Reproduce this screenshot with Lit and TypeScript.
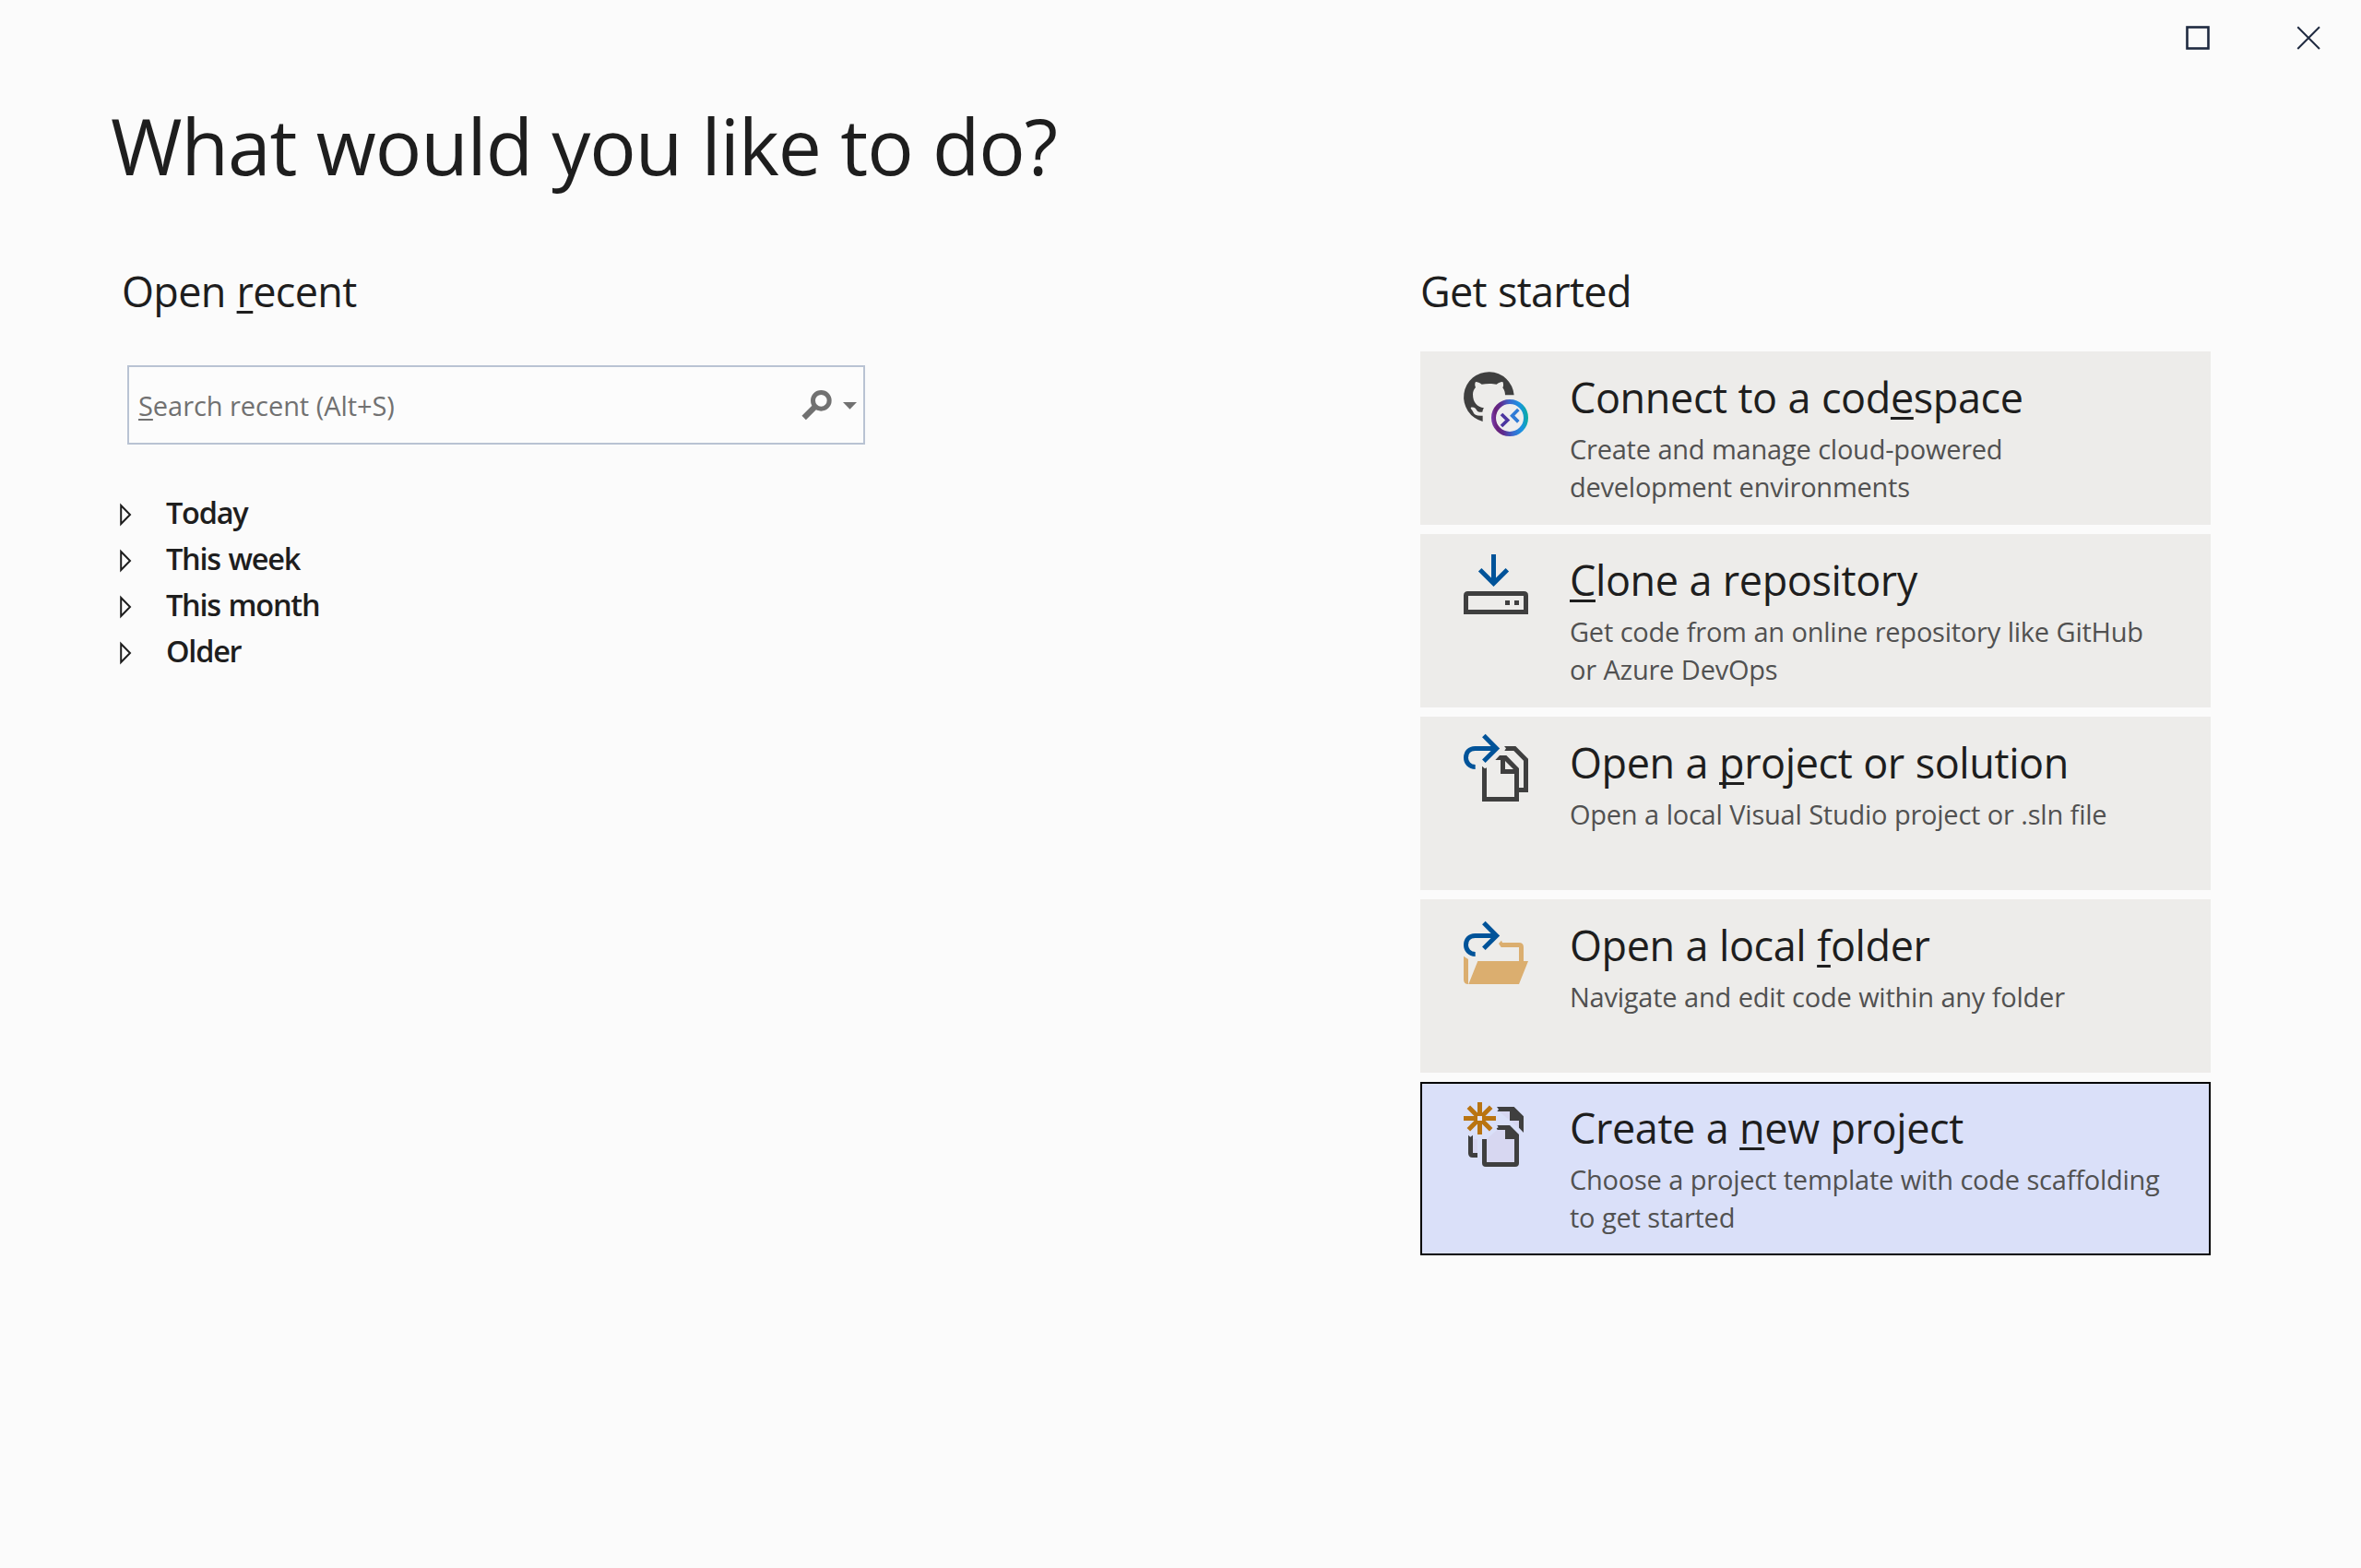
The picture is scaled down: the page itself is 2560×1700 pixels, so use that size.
import { LitElement, html, svg, css, nothing } from "lit";
import { customElement, property } from "lit/decorators.js";
import { classMap } from "lit/directives/class-map.js";

type IconName = "codespace" | "clone" | "project" | "folder" | "create";

interface StartAction {
  icon: IconName;
  before: string;
  key: string;
  after: string;
  description: string;
  selected?: boolean;
}

const actions: StartAction[] = [
  { icon: "codespace", before: "Connect to a cod", key: "e", after: "space", description: "Create and manage cloud-powered development environments" },
  { icon: "clone", before: "", key: "C", after: "lone a repository", description: "Get code from an online repository like GitHub or Azure DevOps" },
  { icon: "project", before: "Open a ", key: "p", after: "roject or solution", description: "Open a local Visual Studio project or .sln file" },
  { icon: "folder", before: "Open a local ", key: "f", after: "older", description: "Navigate and edit code within any folder" },
  { icon: "create", before: "Create a ", key: "n", after: "ew project", description: "Choose a project template with code scaffolding to get started", selected: true },
];

const groups = ["Today", "This week", "This month", "Older"];

const DARK = "#3f3f3f";
const BLUE = "#005399";
const SAND = "#dbae6f";
const AMBER = "#b97412";

const openArrow = svg`
  <path d="M89 139.5 C70 139.5 58.5 126 58.5 109.5 C58.5 92 70 79.5 88 79.5 H158" fill="none" stroke=${BLUE} stroke-width="15"/>
  <path d="M116.5 37.5 L158 79.5 L116.5 121" fill="none" stroke=${BLUE} stroke-width="15"/>`;

const icons = {
  codespace: {
    box: "30 21 240 240",
    art: svg`
      <defs>
        <linearGradient id="ring" gradientUnits="userSpaceOnUse" x1="141" y1="195" x2="261" y2="183">
          <stop offset="0" stop-color="#7b3fb0"/>
          <stop offset="0.14" stop-color="#68217a"/>
          <stop offset="0.3" stop-color="#5c2d91"/>
          <stop offset="0.55" stop-color="#3a6bd0"/>
          <stop offset="0.8" stop-color="#1a93e2"/>
          <stop offset="1" stop-color="#0aae9c"/>
        </linearGradient>
      </defs>
      <path fill=${DARK} d="M215 115 A82 82 0 1 0 113 201 V182 C95 184 85 179 82 170 C79 161 72 160 75 155 C85 153 91 159 94 165 C98 171 106 171 112 170 C113 165 114 161 117 157 C95 154 81 140 81 112 C81 103 85 95 90 90 C87 84 87 77 90 72 C97 72 103 75 110 80 C125 77 145 77 158 80 C166 74 173 71 178 72 C181 78 181 86 178 91 C184 99 186 107 186 115 Z"/>
      <circle cx="201" cy="189" r="52.5" fill="#eeeeee" stroke="url(#ring)" stroke-width="15"/>
      <path d="M174 177 L194 196.500 L174 216" fill="none" stroke="#4b36a0" stroke-width="11"/>
      <path d="M229 162 L209 182 L229 202" fill="none" stroke="#2f7bd6" stroke-width="11"/>`,
  },
  clone: {
    box: "30 15 240 240",
    art: svg`
      <path d="M148.500 33 V127 M104 83 L148.500 127.500 L193 83" fill="none" stroke=${BLUE} stroke-width="15"/>
      <path d="M58.500 220.500 V167 Q58.500 160.500 65 160.500 H247 Q253.500 160.500 253.500 167 V220.500 Z" fill="none" stroke=${DARK} stroke-width="15"/>
      <path d="M186 183 h15 v15 h-15 z M216 183 h15 v15 h-15 z" fill=${DARK}/>`,
  },
  project: {
    box: "30 24 240 240",
    art: svg`
      ${openArrow}
      <path d="M111 137 L120 145 L126 142 V237 H216 V162 H171 V117 H154 L168 102 H190 L231 144 V252 H111 Z M186 120 V147 H213 Z" fill=${DARK} fill-rule="evenodd"/>
      <path d="M183 72 H220 L261 113 V222 H231 V207 H246 V119 L214 87 H184 L189 79 Z" fill=${DARK}/>`,
  },
  folder: {
    box: "30 18 240 240",
    art: svg`
      <g transform="translate(0 9)">${openArrow}</g>
      <path d="M51 155 L66 165 V246 Q51 246 51 231 Z M97 171 H261 L231 246 H67 Z" fill=${SAND}/>
      <path d="M165 114 L174 104 L177 111 H231 Q246 111 246 126 V171 H231 V126 H173 Z" fill=${SAND}/>`,
  },
  create: {
    box: "30 27 240 240",
    art: svg`
      <path d="M166 75 H201 V105 H231 V128 L196 100 Z M126 165 L160 135 H186 V165 H216 V240 H126 Z M81 165 H96 V210 H81 Z" fill="#d7d7f1"/>
      <path d="M159 60 H215 L246 91 V144 L231 128 V105 H201 V75 H160 L165 68 Z" fill=${DARK}/>
      <path d="M111 165 H126 V240 H216 V165 H186 V135 H161 L158 130 L164 127 L160 120 H201 L231 150 V243 Q231 255 219 255 H123 Q111 255 111 243 Z" fill=${DARK}/>
      <path d="M66 152 L73 158 L81 152 V210 H96 V225 H80 Q66 225 66 211 Z" fill=${DARK}/>
      <path d="M103.500 45 V150 M51 97.500 H156 M67 61 L140 134 M140 61 L67 134" fill="none" stroke=${AMBER} stroke-width="15"/>
      <rect x="96" y="90" width="15" height="15" fill="#e4e6fb"/>`,
  },
};

@customElement("start-card")
class StartCard extends LitElement {
  @property({ attribute: false }) action!: StartAction;

  static styles = css`
    :host { display: block; }
    .card {
      box-sizing: border-box;
      display: flex;
      height: 188px;
      border: 2px solid transparent;
      padding: 14px 38px;
      background: #edecea;
    }
    .selected { background: #dae0f9; border-color: #000; }
    .icon { flex: none; display: block; width: 80px; height: 80px; }
    .text { width: 652px; margin: 4px 0 0 42px; }
    .name {
      font-size: 45px;
      line-height: 60px;
      letter-spacing: -0.4px;
      word-spacing: 0.5px;
      color: #1e1e1e;
      white-space: nowrap;
    }
    .key {
      text-decoration: underline;
      text-decoration-thickness: 3px;
      text-underline-offset: 4px;
      text-decoration-skip-ink: none;
    }
    .description {
      margin-top: 5px;
      font-size: 29px;
      line-height: 41px;
      letter-spacing: -0.24px;
      word-spacing: 0.4px;
      color: #515151;
    }
  `;

  render() {
    const a = this.action;
    const icon = icons[a.icon];
    return html`
      <div class=${classMap({ card: true, selected: !!a.selected })}>
        <svg class="icon" viewBox=${icon.box}>${icon.art}</svg>
        <div class="text">
          <div class="name">${a.before || nothing}<span class="key">${a.key}</span>${a.after}</div>
          <div class="description">${a.description}</div>
        </div>
      </div>`;
  }
}

@customElement("app-root")
class AppRoot extends LitElement {
  static styles = css`
    :host {
      display: block;
      font-family: "Open Sans", "Noto Sans", sans-serif;
      color: #1e1e1e;
    }
    .window {
      box-sizing: border-box;
      display: flex;
      flex-direction: column;
      width: 2560px;
      height: 1700px;
      background: #fbfbfb;
      overflow: hidden;
    }
    .titlebar {
      display: flex;
      justify-content: flex-end;
      gap: 94px;
      padding: 28px 44px 0 0;
    }
    .control { display: block; width: 26px; height: 26px; }
    h1, h2 { margin: 0; font-weight: 400; white-space: nowrap; }
    h1 {
      margin-top: 54px;
      padding-left: 120px;
      font-size: 84px;
      line-height: 100px;
      letter-spacing: -1.1px;
      word-spacing: 0.7px;
    }
    h2 {
      font-size: 45px;
      line-height: 60px;
      letter-spacing: -0.7px;
      word-spacing: 1px;
    }
    .columns {
      display: grid;
      grid-template-columns: 1410px 857px;
      margin-top: 78px;
      padding-left: 130px;
    }
    .recent h2 { padding-left: 2px; }
    .key {
      text-decoration: underline;
      text-decoration-thickness: 3px;
      text-underline-offset: 4px;
      text-decoration-skip-ink: none;
    }
    .search {
      box-sizing: border-box;
      display: flex;
      align-items: center;
      justify-content: space-between;
      width: 800px;
      height: 86px;
      margin: 50px 0 0 8px;
      padding: 0 4px 0 10px;
      border: 2px solid #b9c3d3;
      background: #fcfcfc;
      font-size: 29px;
      letter-spacing: -0.05px;
      color: #717171;
    }
    .search .key { text-decoration-thickness: 2px; text-underline-offset: 3px; }
    .search-tools { display: block; width: 66px; height: 40px; margin-bottom: 2px; }
    .groups { margin: 48px 0 0; padding: 0; list-style: none; }
    .group {
      display: flex;
      align-items: center;
      gap: 37px;
      height: 50px;
      font-size: 32.5px;
      font-weight: 600;
      letter-spacing: -1.25px;
      word-spacing: 1.5px;
    }
    .label { line-height: 48px; padding-top: 2px; }
    .expander { display: block; width: 13px; height: 26px; margin-top: 5px; }
    .cards { display: grid; gap: 10px; margin-top: 35px; }
  `;

  render() {
    return html`
      <div class="window">
        <div class="titlebar">
          <svg class="control" viewBox="0 0 26 26"><rect x="1.500" y="1.500" width="23" height="23" fill="none" stroke="#1f2a40" stroke-width="2.600"/></svg>
          <svg class="control" viewBox="0 0 26 26"><path d="M1.300 1.300 L25 25 M25 1.300 L1.300 25" fill="none" stroke="#1f2a40" stroke-width="2"/></svg>
        </div>
        <h1>What would you like to do?</h1>
        <div class="columns">
          <section class="recent">
            <h2>Open <span class="key">r</span>ecent</h2>
            <div class="search">
              <span><span class="key">S</span>earch recent (Alt+S)</span>
              <svg class="search-tools" viewBox="78 99 198 120">
                <circle cx="151" cy="148" r="26.500" fill="none" stroke="#717171" stroke-width="15"/>
                <path d="M95 204 L131 168" fill="none" stroke="#717171" stroke-width="19"/>
                <path d="M222 153 H267 L244.500 176 Z" fill="#717171"/>
              </svg>
            </div>
            <ul class="groups">
              ${groups.map((g) => html`
                <li class="group">
                  <svg class="expander" viewBox="0 0 13 26"><path d="M1.200 3 V23 L11 13 Z" fill="none" stroke="#1e1e1e" stroke-width="2"/></svg>
                  <span class="label">${g}</span>
                </li>`)}
            </ul>
          </section>
          <section>
            <h2>Get started</h2>
            <div class="cards">
              ${actions.map((a) => html`<start-card .action=${a}></start-card>`)}
            </div>
          </section>
        </div>
      </div>`;
  }
}
